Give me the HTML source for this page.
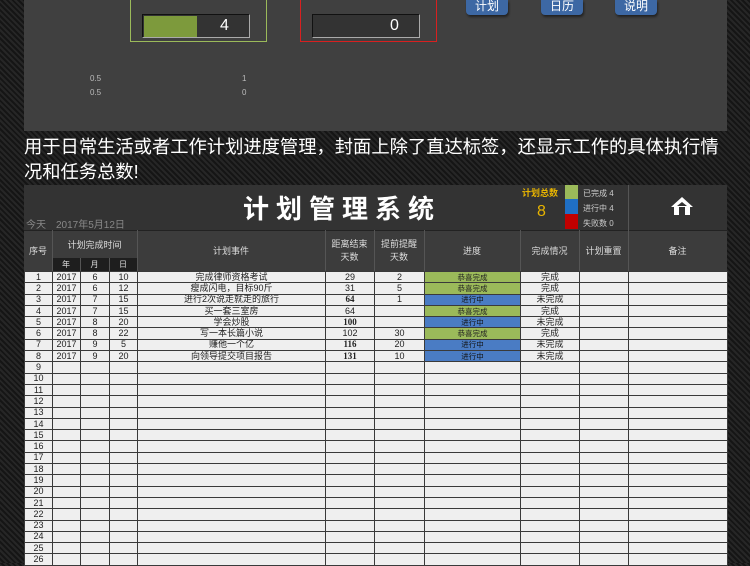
<!DOCTYPE html>
<html><head><meta charset="utf-8"><style>
*{margin:0;padding:0;box-sizing:border-box}
body{width:750px;height:563px;overflow:hidden;background:#1c1c1c;background-image:repeating-linear-gradient(45deg,#262626 0 2px,#151515 2px 4px);font-family:"Liberation Sans","Noto Sans CJK SC",sans-serif;position:relative}
.a{position:absolute}
.btn{background:#3d68a4;border-radius:0 0 4px 4px;color:#fff;font-size:12px;text-align:center;line-height:12px;box-shadow:1px 2px 2px #222}
table{border-collapse:collapse;table-layout:fixed;position:absolute;left:24px;top:271px;width:703px;font-size:9px;color:#222}
td{border:1px solid #3a3a3a;background:#efefef;height:11.3px;text-align:center;line-height:9px;padding:0;overflow:hidden;white-space:nowrap}
td.g{background:#9bba5a;font-size:7.5px}
td.b{background:#4a7cc4;font-size:7.5px;color:#111}
td.bd{font-weight:bold;font-family:"Liberation Serif","Noto Serif CJK SC",serif}
.h{color:#ddd;font-size:9px;text-align:center}
.vl{position:absolute;width:1px;background:#555}
</style></head><body>
<div class="a" style="left:24px;top:0;width:703px;height:131px;background:#404040"></div>
<div class="a" style="left:130px;top:-2px;width:137px;height:44px;border:1px solid #9bba5a"></div>
<div class="a" style="left:142px;top:14px;width:108px;height:24px;background:#333;border:1px solid #111;border-bottom-color:#aaa;border-right-color:#aaa"></div>
<div class="a" style="left:144px;top:16px;width:53px;height:21px;background:#7d9a3c"></div>
<div class="a" style="left:220px;top:17px;color:#fff;font-size:16px">4</div>
<div class="a" style="left:300px;top:-2px;width:137px;height:44px;border:1px solid #d82020"></div>
<div class="a" style="left:312px;top:14px;width:108px;height:24px;background:#333;border:1px solid #111;border-bottom-color:#aaa;border-right-color:#aaa"></div>
<div class="a" style="left:390px;top:17px;color:#fff;font-size:16px">0</div>
<div class="a btn" style="left:466px;top:0;width:42px;height:15px">计划</div>
<div class="a btn" style="left:541px;top:0;width:42px;height:15px">日历</div>
<div class="a btn" style="left:615px;top:0;width:42px;height:15px">说明</div>
<div class="a" style="left:90px;top:72px;color:#bbb;font-size:8px;line-height:14px">0.5<br>0.5</div>
<div class="a" style="left:242px;top:72px;color:#bbb;font-size:8px;line-height:14px">1<br>0</div>
<div class="a" style="left:24px;top:134px;color:#fff;font-size:18.3px;line-height:25px;white-space:nowrap">用于日常生活或者工作计划进度管理，封面上除了直达标签，还显示工作的具体执行情<br>况和任务总数!</div>
<div class="a" style="left:24px;top:185px;width:703px;height:378px;background:#3a3a3a"></div>
<div class="a" style="left:24px;top:185px;width:703px;height:45px;background:#333"></div>
<div class="a" style="left:243px;top:189px;color:#fff;font-size:26px;font-weight:bold;letter-spacing:7px">计划管理系统</div>
<div class="a" style="left:26px;top:216px;color:#888;font-size:10px">今天　2017年5月12日</div>
<div class="a" style="left:522px;top:186px;color:#e8b400;font-size:9px;font-weight:bold">计划总数</div>
<div class="a" style="left:537px;top:203px;color:#e8b400;font-size:16px">8</div>
<div class="a" style="left:565px;top:185px;width:13px;height:14px;background:#9bba5a"></div>
<div class="a" style="left:565px;top:199px;width:13px;height:15px;background:#1f6fc4"></div>
<div class="a" style="left:565px;top:214px;width:13px;height:15px;background:#c00000"></div>
<div class="a" style="left:583px;top:186px;color:#ccc;font-size:8px;line-height:15px">已完成 4<br>进行中 4<br>失败数 0</div>
<div class="vl" style="left:628px;top:185px;height:45px"></div>
<svg class="a" style="left:670px;top:196px" width="24" height="20" viewBox="0 0 24 20"><path d="M12 1 L1 11 L4 11 L4 19 L20 19 L20 11 L23 11 Z" fill="#fff"/><path d="M9 11h6v8H9z M7 10 L12 6 L17 10" fill="#333"/></svg>
<div class="a" style="left:24px;top:230px;width:703px;height:41px;background:#3c3c3c;border-top:1px solid #222"></div>
<div class="a" style="left:52px;top:258px;width:85px;height:13px;background:#1e1e1e"></div>
<div class="vl" style="left:52px;top:230px;height:41px"></div>
<div class="vl" style="left:137px;top:230px;height:41px"></div>
<div class="vl" style="left:80px;top:258px;height:13px"></div>
<div class="vl" style="left:109px;top:258px;height:13px"></div>
<div class="vl" style="left:325px;top:230px;height:41px"></div>
<div class="vl" style="left:374px;top:230px;height:41px"></div>
<div class="vl" style="left:424px;top:230px;height:41px"></div>
<div class="vl" style="left:520px;top:230px;height:41px"></div>
<div class="vl" style="left:579px;top:230px;height:41px"></div>
<div class="vl" style="left:628px;top:230px;height:41px"></div>
<div class="a h" style="left:24px;top:244px;width:28px">序号</div>
<div class="a h" style="left:52px;top:238px;width:85px">计划完成时间</div>
<div class="a h" style="left:52px;top:259px;width:28px;font-size:8px">年</div>
<div class="a h" style="left:80px;top:259px;width:29px;font-size:8px">月</div>
<div class="a h" style="left:109px;top:259px;width:28px;font-size:8px">日</div>
<div class="a h" style="left:137px;top:244px;width:188px">计划事件</div>
<div class="a h" style="left:325px;top:238px;width:49px;line-height:13px">距离结束<br>天数</div>
<div class="a h" style="left:374px;top:238px;width:50px;line-height:13px">提前提醒<br>天数</div>
<div class="a h" style="left:424px;top:244px;width:96px">进度</div>
<div class="a h" style="left:520px;top:244px;width:59px">完成情况</div>
<div class="a h" style="left:579px;top:244px;width:49px">计划重置</div>
<div class="a h" style="left:628px;top:244px;width:99px">备注</div>
<table>
<colgroup><col style="width:28px"><col style="width:28px"><col style="width:29px"><col style="width:28px"><col style="width:188px"><col style="width:49px"><col style="width:50px"><col style="width:96px"><col style="width:59px"><col style="width:49px"><col style="width:99px"></colgroup>
<tr><td>1</td><td>2017</td><td>6</td><td>10</td><td>完成律师资格考试</td><td>29</td><td>2</td><td class="g">恭喜完成</td><td>完成</td><td></td><td></td></tr>
<tr><td>2</td><td>2017</td><td>6</td><td>12</td><td>瘦成闪电，目标90斤</td><td>31</td><td>5</td><td class="g">恭喜完成</td><td>完成</td><td></td><td></td></tr>
<tr><td>3</td><td>2017</td><td>7</td><td>15</td><td>进行2次说走就走的旅行</td><td class="bd">64</td><td>1</td><td class="b">进行中</td><td>未完成</td><td></td><td></td></tr>
<tr><td>4</td><td>2017</td><td>7</td><td>15</td><td>买一套三室房</td><td>64</td><td></td><td class="g">恭喜完成</td><td>完成</td><td></td><td></td></tr>
<tr><td>5</td><td>2017</td><td>8</td><td>20</td><td>学会炒股</td><td class="bd">100</td><td></td><td class="b">进行中</td><td>未完成</td><td></td><td></td></tr>
<tr><td>6</td><td>2017</td><td>8</td><td>22</td><td>写一本长篇小说</td><td>102</td><td>30</td><td class="g">恭喜完成</td><td>完成</td><td></td><td></td></tr>
<tr><td>7</td><td>2017</td><td>9</td><td>5</td><td>赚他一个亿</td><td class="bd">116</td><td>20</td><td class="b">进行中</td><td>未完成</td><td></td><td></td></tr>
<tr><td>8</td><td>2017</td><td>9</td><td>20</td><td>向领导提交项目报告</td><td class="bd">131</td><td>10</td><td class="b">进行中</td><td>未完成</td><td></td><td></td></tr>
<tr><td>9</td><td></td><td></td><td></td><td></td><td></td><td></td><td></td><td></td><td></td><td></td></tr>
<tr><td>10</td><td></td><td></td><td></td><td></td><td></td><td></td><td></td><td></td><td></td><td></td></tr>
<tr><td>11</td><td></td><td></td><td></td><td></td><td></td><td></td><td></td><td></td><td></td><td></td></tr>
<tr><td>12</td><td></td><td></td><td></td><td></td><td></td><td></td><td></td><td></td><td></td><td></td></tr>
<tr><td>13</td><td></td><td></td><td></td><td></td><td></td><td></td><td></td><td></td><td></td><td></td></tr>
<tr><td>14</td><td></td><td></td><td></td><td></td><td></td><td></td><td></td><td></td><td></td><td></td></tr>
<tr><td>15</td><td></td><td></td><td></td><td></td><td></td><td></td><td></td><td></td><td></td><td></td></tr>
<tr><td>16</td><td></td><td></td><td></td><td></td><td></td><td></td><td></td><td></td><td></td><td></td></tr>
<tr><td>17</td><td></td><td></td><td></td><td></td><td></td><td></td><td></td><td></td><td></td><td></td></tr>
<tr><td>18</td><td></td><td></td><td></td><td></td><td></td><td></td><td></td><td></td><td></td><td></td></tr>
<tr><td>19</td><td></td><td></td><td></td><td></td><td></td><td></td><td></td><td></td><td></td><td></td></tr>
<tr><td>20</td><td></td><td></td><td></td><td></td><td></td><td></td><td></td><td></td><td></td><td></td></tr>
<tr><td>21</td><td></td><td></td><td></td><td></td><td></td><td></td><td></td><td></td><td></td><td></td></tr>
<tr><td>22</td><td></td><td></td><td></td><td></td><td></td><td></td><td></td><td></td><td></td><td></td></tr>
<tr><td>23</td><td></td><td></td><td></td><td></td><td></td><td></td><td></td><td></td><td></td><td></td></tr>
<tr><td>24</td><td></td><td></td><td></td><td></td><td></td><td></td><td></td><td></td><td></td><td></td></tr>
<tr><td>25</td><td></td><td></td><td></td><td></td><td></td><td></td><td></td><td></td><td></td><td></td></tr>
<tr><td>26</td><td></td><td></td><td></td><td></td><td></td><td></td><td></td><td></td><td></td><td></td></tr>
</table>
</body></html>
